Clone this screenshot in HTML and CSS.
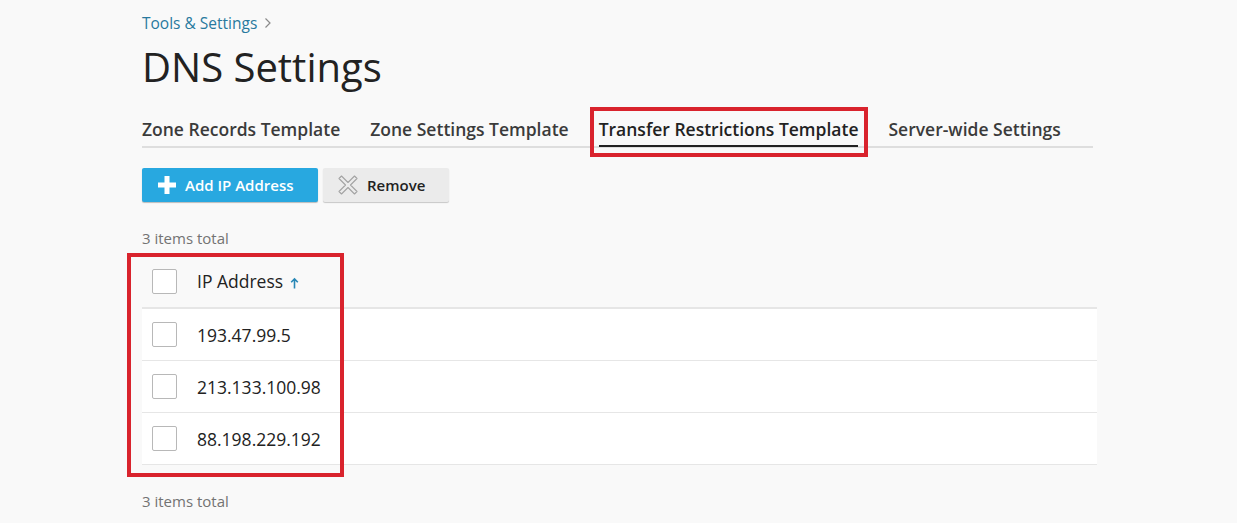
FILE: index.html
```html
<!DOCTYPE html>
<html>
<head>
<meta charset="utf-8">
<link rel="stylesheet" href="styles.css">
</head>
<body>
<div class="page">
  <nav class="breadcrumb"><a href="#">Tools &amp; Settings</a><svg class="chev" width="8" height="12" viewBox="0 0 8 12"><path d="M1.5 1.5L6 6L1.5 10.5" fill="none" stroke="#8a8a8a" stroke-width="1.2"/></svg></nav>
  <h1 class="title">DNS Settings</h1>
  <div class="tabs">
    <a class="tab" href="#">Zone Records Template</a>
    <a class="tab" href="#">Zone Settings Template</a>
    <a class="tab active" href="#"><span class="tab-label">Transfer Restrictions Template</span></a>
    <a class="tab" href="#">Server-wide Settings</a>
  </div>
  <div class="toolbar">
    <button class="btn btn-primary">
      <svg class="ico" width="18" height="18" viewBox="0 0 18 18"><path d="M6.5 0h5v6.5H18v5h-6.5V18h-5v-6.5H0v-5h6.5z" fill="#fff"/></svg>
      Add IP Address
    </button>
    <button class="btn btn-default">
      <svg class="ico" width="20" height="20" viewBox="0 0 20 20"><path d="M1 3.5L3.5 1L10 7.5L16.5 1L19 3.5L12.5 10L19 16.5L16.5 19L10 12.5L3.5 19L1 16.5L7.5 10Z" fill="none" stroke="#a3a3a3" stroke-width="1.1" stroke-linejoin="round"/></svg>
      Remove
    </button>
  </div>
  <div class="total">3 items total</div>
  <div class="table-wrap">
    <table class="list">
      <thead>
        <tr><th class="cb"><span class="checkbox"></span></th><th>IP Address <svg class="sort" width="9" height="12" viewBox="0 0 9 12"><path d="M4.5 11.5V2M1.2 5.3L4.5 2L7.8 5.3" fill="none" stroke="#2887b6" stroke-width="1.6"/></svg></th></tr>
      </thead>
      <tbody>
        <tr><td class="cb"><span class="checkbox"></span></td><td>193.47.99.5</td></tr>
        <tr><td class="cb"><span class="checkbox"></span></td><td>213.133.100.98</td></tr>
        <tr><td class="cb"><span class="checkbox"></span></td><td>88.198.229.192</td></tr>
      </tbody>
    </table>
    <div class="mark mark-table"></div>
  </div>
  <div class="total total-bottom">3 items total</div>
</div>
</body>
</html>
```
FILE: styles.css
```css
html, body {
  margin: 0;
  padding: 0;
  background: #f9f9f9;
}
body {
  font-family: "Open Sans", "Liberation Sans", sans-serif;
  color: #222;
}
.page {
  width: 955px;
  padding: 13px 0 0 142px;
}
.breadcrumb {
  font-size: 15.5px;
  line-height: 20px;
  height: 20px;
  display: flex;
  align-items: center;
}
.breadcrumb a {
  color: #28799e;
  text-decoration: none;
}
.chev {
  margin-left: 7px;
}
.title {
  font-size: 40px;
  font-weight: 400;
  line-height: 48px;
  margin: 10px 0 0 0;
  color: #222;
}
.tabs {
  display: flex;
  gap: 30px;
  width: 951px;
  margin-top: 24px;
  border-bottom: 2px solid #dedede;
  height: 31px;
}
.tab {
  font-size: 17.5px;
  font-weight: 600;
  color: #3b3b3b;
  text-decoration: none;
  line-height: 24px;
  padding-top: 2px;
  white-space: nowrap;
}
.tab.active {
  position: relative;
  color: #222;
}
.tab-label {
  display: inline-block;
  border-bottom: 2px solid #222;
  padding-bottom: 4px;
}
.tab.active::after {
  content: "";
  position: absolute;
  left: -9px;
  right: -10px;
  top: -8px;
  bottom: -11px;
  border: 4px solid #d9232d;
}
.toolbar {
  display: flex;
  gap: 5px;
  margin-top: 20px;
}
.btn {
  display: inline-flex;
  align-items: center;
  font-family: "Open Sans", "Liberation Sans", sans-serif;
  font-size: 15px;
  font-weight: 600;
  height: 34px;
  border: 0;
  border-radius: 2px;
  padding: 0 16px;
  gap: 9px;
  cursor: pointer;
}
.btn-primary {
  background: #28a8e0;
  color: #fff;
  box-shadow: 0 1px 1px rgba(0,0,0,0.25);
  width: 176px;
}
.btn-default {
  background: #ebebeb;
  color: #222;
  box-shadow: 0 1px 1px rgba(0,0,0,0.2);
  width: 126px;
  padding-left: 15px;
}
.total {
  font-size: 15px;
  line-height: 20px;
  color: #737373;
  margin-top: 26px;
}
.table-wrap {
  position: relative;
  margin-top: 7px;
}
.list {
  width: 955px;
  border-collapse: collapse;
}
.list th, .list td {
  text-align: left;
  font-size: 17.5px;
  font-weight: 400;
  color: #222;
  padding: 0;
  height: 52px;
}
.list thead tr {
  border-bottom: 2px solid #e6e6e6;
}
.list tbody tr {
  background: #fff;
  border-bottom: 1px solid #e6e6e6;
}
.list tbody td {
  height: 51px;
}
.list .cb {
  width: 45px;
  padding-left: 10px;
}
.checkbox {
  display: block;
  width: 23px;
  height: 23px;
  border: 1px solid #b8b8b8;
  border-radius: 2px;
  background: #fff;
}
.sort {
  margin-left: 2px;
  vertical-align: -1px;
}
.mark-table {
  position: absolute;
  left: -15px;
  top: -2px;
  width: 217px;
  height: 224px;
  border: 4px solid #d9232d;
  box-sizing: border-box;
}
.total-bottom {
  margin-top: 26px;
}
```
